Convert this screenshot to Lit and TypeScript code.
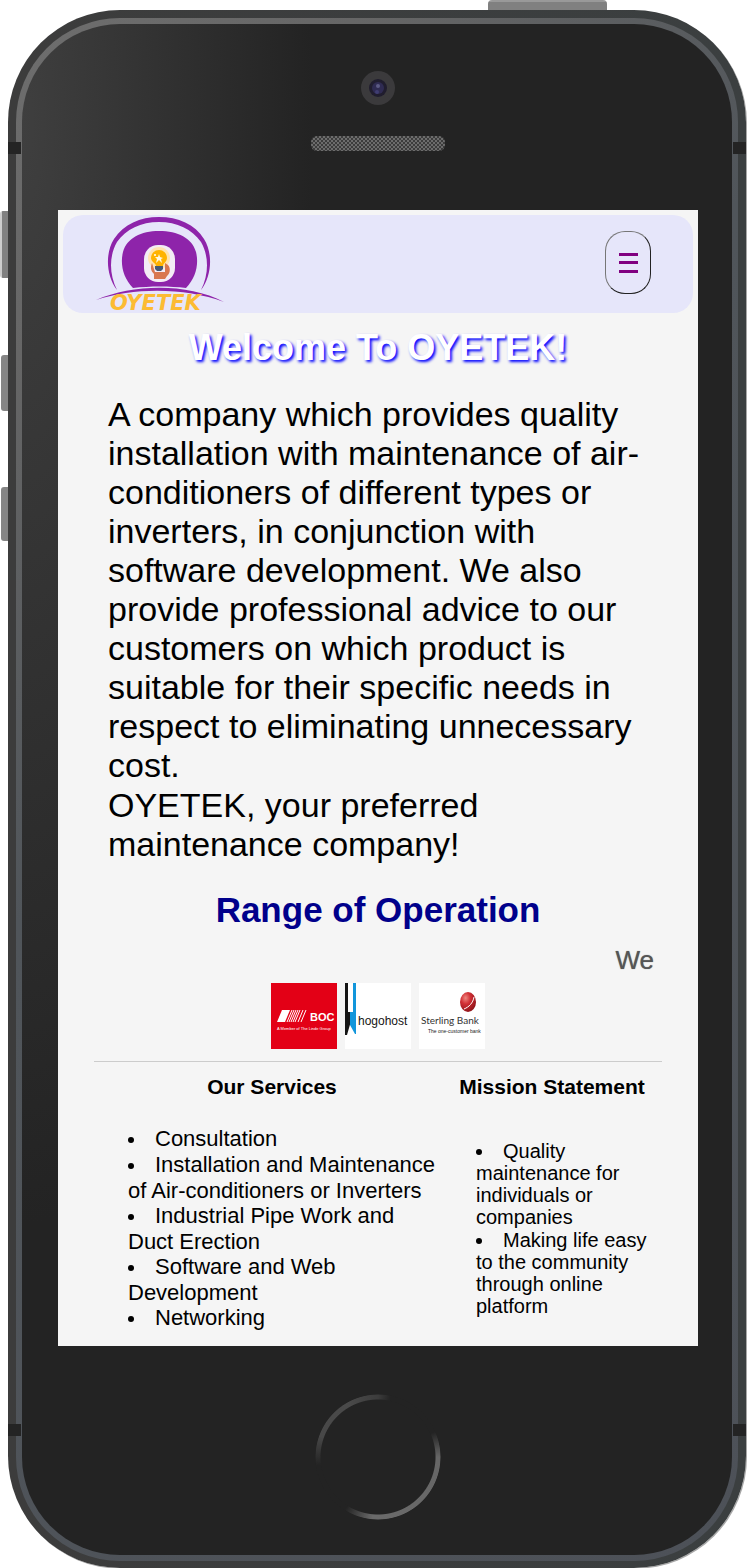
import { LitElement, html, css } from "lit";
import { customElement, state } from "lit/decorators.js";

@customElement("oyetek-logo")
class OyetekLogo extends LitElement {
  static styles = css`
    :host { display: block; }
    svg { display: block; overflow: visible; }
    .name { font: italic bold 21px "DejaVu Sans", sans-serif; }
  `;
  render() {
    return html`
      <svg width="128" height="96" viewBox="0 0 128 96" role="img" aria-label="OYETEK">
        <path fill="#8e24aa" d="M20 73C9 59 8 36 17 22C27 7 43 0 62 0C81 0 98 7 107 22C116 36 115 59 104 73C112 57 112 39 104 25C95 12 80 5 62 5C44 5 29 12 20 25C12 39 12 57 20 73Z"/>
        <path fill="#8e24aa" d="M36 71C26 61 23 47 26 35C30 21 44 14 62 14C81 14 95 21 99 35C102 47 99 61 89 71C73 69 53 69 36 71Z"/>
        <rect x="47" y="28" width="31" height="37" rx="14" fill="#f3ebf5"/>
        <circle cx="62" cy="41" r="11" fill="#ffe3b0"/>
        <path fill="#d9774f" d="M55 46C53 51 54 54 57 57V62H68L70 59C73 57 74 51 71 48L68 46V55H58Z"/>
        <path fill="#ffb300" d="M54 41A8 8 0 1 1 70 41C70 45 66 46 66 49H59C59 46 54 45 54 41Z"/>
        <path fill="#455a75" d="M58 49H66V52L64 54H60L58 52Z"/>
        <path fill="#fff8e1" d="M62 37l1 3 3 1-2 1 1 4-3-3-3 3 1-4-2-2 3 0z"/>
        <circle cx="58" cy="38" r="1" fill="#fff"/>
        <path fill="#8e24aa" d="M-1 83C37 67 90 66 127 85C89 71 39 70 -1 83Z"/>
        <text class="name" x="13" y="93" fill="#fcbb33">OYETEK</text>
      </svg>
    `;
  }
}

@customElement("partner-logos")
class PartnerLogos extends LitElement {
  static styles = css`
    :host { display: flex; justify-content: center; gap: 8px; }
    svg { display: block; width: 66px; height: 66px; }
    .boc { font: bold 11px "Liberation Sans", sans-serif; }
    .group { font: 4px "Liberation Sans", sans-serif; }
    .motto { font: 5px "Liberation Sans", sans-serif; }
    .host { font: 12px "Liberation Sans", sans-serif; }
    .sterling { font: 10px "Lato", sans-serif; }
  `;
  render() {
    return html`
      <svg viewBox="0 0 66 66" role="img" aria-label="BOC">
        <rect width="66" height="66" fill="#e30016"/>
        <path fill="#fff" d="M11 27H19L14 39H6Z"/>
        <path stroke="#fff" stroke-width="1" fill="none" d="M21 27L16 39M23 27L18 39M25 27L20 39M27 27L22 39M29 27L24 39M32 27L27 39M35 27L30 39"/>
        <text class="boc" x="39" y="38" fill="#fff">BOC</text>
        <text class="group" x="6" y="47" fill="#fff">A Member of The Linde Group</text>
      </svg>
      <svg viewBox="0 0 66 66" role="img" aria-label="Whogohost">
        <rect width="66" height="66" fill="#fff"/>
        <path fill="#151515" d="M0 0H3V29H6V38L2 52H0Z"/>
        <path fill="#1296db" d="M8 0H11V51H10L5 42V29H8Z"/>
        <text class="host" x="13" y="42" fill="#151515">hogohost</text>
      </svg>
      <svg viewBox="0 0 66 66" role="img" aria-label="Sterling Bank">
        <defs>
          <radialGradient id="ball" cx="35%" cy="30%" r="75%">
            <stop offset="0" stop-color="#ee8880"/>
            <stop offset="0.4" stop-color="#d23035"/>
            <stop offset="1" stop-color="#8c1218"/>
          </radialGradient>
        </defs>
        <rect width="66" height="66" fill="#fff"/>
        <ellipse cx="49" cy="19" rx="8" ry="10" fill="url(#ball)"/>
        <path stroke="#fff" stroke-width="1" fill="none" d="M45 26C50 24 54 20 55 14"/>
        <text class="sterling" x="2" y="41" fill="#333">Sterling Bank</text>
        <text class="motto" x="9" y="50" fill="#222">The one-customer bank</text>
      </svg>
    `;
  }
}

@customElement("phone-frame")
class PhoneFrame extends LitElement {
  static styles = css`
    :host { display: block; padding: 10px 2px 1px 8px; background: #fff; }
    .case {
      position: relative;
      border-radius: 112px;
      padding: 8px 8px 7px;
      background: linear-gradient(90deg, #3c3c3c, #3b3f40);
      box-shadow: 1px 1px 0 #a8a8a8;
    }
    .ring {
      border-radius: 104px;
      padding: 6px;
      background: linear-gradient(135deg, #6e6e6e, #666 15%, #50555a 40%, #4d5158);
    }
    .glass {
      display: flex;
      flex-direction: column;
      align-items: center;
      border-radius: 98px;
      padding: 47px 34px 35px 36px;
      background: radial-gradient(ellipse 290px 1100px at 0 100px, #3f3f3f, #232323) #232323;
    }
    .camera { display: block; }
    .speaker { display: block; margin: 31px 0 59px; }
    .screen { align-self: stretch; background: #f5f5f5; }
    .home {
      width: 126px;
      height: 126px;
      margin-top: 48px;
      border-radius: 50%;
      background: conic-gradient(#3c3c3c 0deg, #232323 12deg, #232323 66deg, #666 90deg, #6a6a6a 185deg, #232323 212deg, #232323 262deg, #484848 290deg, #4a4a4a 330deg, #3c3c3c 360deg);
      mask: radial-gradient(circle closest-side, transparent 57px, #000 58px, #000 62px, transparent 63px);
    }
    .key { position: absolute; background: #858585; }
    .power { right: 139px; top: -10px; width: 119px; height: 10px; border-radius: 4px 4px 0 0; background: linear-gradient(#999 2px, #808080 2px); }
    .mute { left: -8px; top: 201px; width: 8px; height: 67px; border-radius: 3px 0 0 3px; background: linear-gradient(90deg, #ccc 2px, #808080 2px); }
    .up { left: -7px; top: 345px; width: 7px; height: 56px; border-radius: 3px 0 0 3px; }
    .down { left: -7px; top: 477px; width: 7px; height: 54px; border-radius: 3px 0 0 3px; }
    .band { position: absolute; width: 13px; height: 12px; background: #242424; }
    .top { top: 132px; }
    .bottom { bottom: 132px; }
    .left { left: 0; }
    .right { right: 0; }
  `;
  render() {
    return html`
      <div class="case">
        <div class="key power"></div>
        <div class="key mute"></div>
        <div class="key up"></div>
        <div class="key down"></div>
        <div class="ring">
          <div class="glass">
            <svg class="camera" width="34" height="34" viewBox="0 0 34 34" aria-hidden="true">
              <circle cx="17" cy="17" r="17" fill="#3b3a3c"/>
              <circle cx="17" cy="17" r="9" fill="#201d2e"/>
              <circle cx="17" cy="17" r="6" fill="#2f2b52"/>
              <circle cx="17" cy="15" r="2" fill="#5d5b85"/>
              <circle cx="16" cy="21" r="2" fill="#3f3d72"/>
            </svg>
            <svg class="speaker" width="134" height="15" viewBox="0 0 134 15" aria-hidden="true">
              <defs>
                <pattern id="mesh" width="4" height="4" patternUnits="userSpaceOnUse">
                  <rect width="4" height="4" fill="#3c3c3c"/>
                  <rect width="2" height="2" fill="#6c6c6c"/>
                  <rect x="2" y="2" width="2" height="2" fill="#6c6c6c"/>
                </pattern>
              </defs>
              <rect width="134" height="15" rx="6" fill="url(#mesh)"/>
            </svg>
            <div class="screen"><slot></slot></div>
            <div class="home"></div>
          </div>
        </div>
        <div class="band top left"></div>
        <div class="band top right"></div>
        <div class="band bottom left"></div>
        <div class="band bottom right"></div>
      </div>
    `;
  }
}

@customElement("app-root")
class AppRoot extends LitElement {
  static styles = css`
    :host { display: block; font-family: "Liberation Sans", Arial, sans-serif; color: #000; }
    h1, h2, h3, p, ul { margin: 0; padding: 0; }
    .page { padding: 5px 0 15px; }
    .bar {
      display: flex;
      align-items: flex-start;
      justify-content: space-between;
      margin: 0 5px;
      padding: 2px 42px 0 34px;
      border-radius: 20px;
      background: #e6e6fa;
    }
    .menu {
      display: flex;
      align-items: center;
      justify-content: center;
      width: 46px;
      height: 63px;
      margin-top: 14px;
      padding: 0;
      border: 1px solid;
      border-color: #767676 #222 #222 #767676;
      border-radius: 20px;
      background: transparent;
    }
    .welcome {
      margin-top: 14px;
      font-size: 36px;
      line-height: 41px;
      text-align: center;
      color: #fff;
      text-shadow: 2px 2px 3px #00f;
    }
    .about { display: grid; gap: 1px; margin-top: 27px; padding: 0 50px; font-size: 34px; line-height: 39px; }
    .range { margin-top: 26px; font-size: 35px; line-height: 40px; text-align: center; color: #00008b; }
    .content { padding: 0 36px; }
    .ticker {
      margin-top: 15px;
      padding-right: 8px;
      overflow: hidden;
      font-size: 26px;
      line-height: 30px;
      text-align: right;
      color: #555;
      text-shadow: 0 0 1px #777;
    }
    .partners { margin-top: 8px; }
    .rule { height: 1px; margin: 12px 0 0; border: 0; background: #ccc; }
    .columns { display: grid; grid-template-columns: 356fr 212fr; padding-top: 13px; }
    .column { display: flex; flex-direction: column; }
    .title { font-size: 21px; line-height: 24px; text-align: center; }
    .list { display: grid; margin: auto 0; list-style-position: inside; }
    .list li::marker { font-size: 20px; }
    .services { padding: 27px 8px 0 34px; font-size: 22px; line-height: 25px; }
    .mission { gap: 1px; padding: 26px 8px 0 26px; font-size: 20px; line-height: 22px; }
    .narrow { padding-right: 8px; }
  `;

  @state() open = false;

  services = [
    "Consultation",
    "Installation and Maintenance of Air-conditioners or Inverters",
    "Industrial Pipe Work and Duct Erection",
    "Software and Web Development",
    "Networking",
  ];
  mission = [
    "Quality maintenance for individuals or companies",
    "Making life easy to the community through online platform",
  ];

  render() {
    return html`
      <phone-frame>
        <main class="page">
          <header class="bar">
            <oyetek-logo></oyetek-logo>
            <button class="menu" aria-label="Menu" aria-expanded=${this.open} @click=${() => (this.open = !this.open)}>
              <svg width="19" height="20" viewBox="0 0 19 20" aria-hidden="true">
                <path fill="#800080" d="M0 0H19V3H0ZM0 8H19V11H0ZM0 17H19V20H0Z"/>
              </svg>
            </button>
          </header>
          <h1 class="welcome">Welcome To OYETEK!</h1>
          <div class="about">
            <p>A company which provides quality installation with maintenance of air-conditioners of different types or inverters, in conjunction with software development. We also provide professional advice to our customers on which product is suitable for their specific needs in respect to eliminating unnecessary cost.</p>
            <p>OYETEK, your preferred maintenance company!</p>
          </div>
          <h2 class="range">Range of Operation</h2>
          <div class="content">
            <div class="ticker">We</div>
            <partner-logos class="partners"></partner-logos>
            <hr class="rule" />
            <div class="columns">
              <section class="column">
                <h3 class="title">Our Services</h3>
                <ul class="list services">${this.services.map((s) => html`<li>${s}</li>`)}</ul>
              </section>
              <section class="column">
                <h3 class="title narrow">Mission Statement</h3>
                <ul class="list mission">${this.mission.map((s) => html`<li>${s}</li>`)}</ul>
              </section>
            </div>
          </div>
        </main>
      </phone-frame>
    `;
  }
}
